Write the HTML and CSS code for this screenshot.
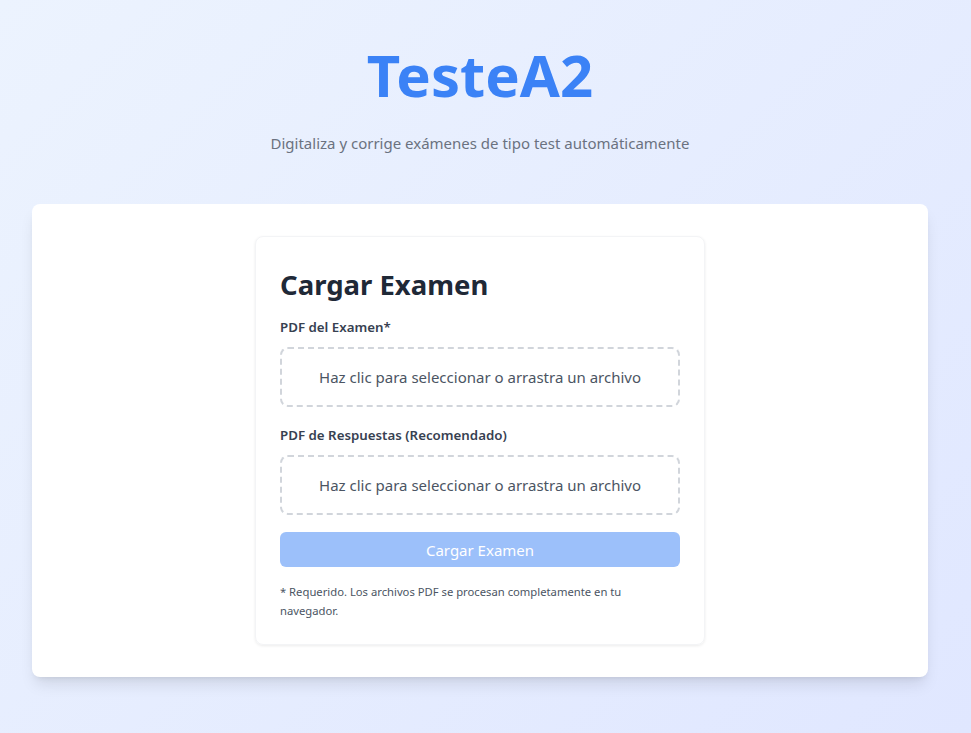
FILE: index.html
```html
<!DOCTYPE html>
<html lang="es">
<head>
  <meta charset="UTF-8">
  <meta name="viewport" content="width=device-width, initial-scale=1.0">
  <title>TesteA2</title>
  <link rel="stylesheet" href="styles.css">
</head>
<body>

<div class="app">
  <header class="header">
    <h1 class="brand">TesteA2</h1>
    <p class="tagline">Digitaliza y corrige exámenes de tipo test automáticamente</p>
  </header>

  <main class="panel">
    <div class="upload-card">
      <h2>Cargar Examen</h2>

      <label class="field-label">PDF del Examen*</label>
      <div class="dropzone">Haz clic para seleccionar o arrastra un archivo</div>

      <label class="field-label">PDF de Respuestas (Recomendado)</label>
      <div class="dropzone">Haz clic para seleccionar o arrastra un archivo</div>

      <button class="submit" disabled>Cargar Examen</button>

      <p class="note">* Requerido. Los archivos PDF se procesan completamente en tu navegador.</p>
    </div>
  </main>
</div>

</body>
</html>
```

FILE: styles.css
```css
    html, body {
      height: 100%;
    }

    body {
      margin: 0;
      padding: 0 11px 0 0;
      font-family: 'Noto Sans', 'Open Sans', sans-serif;
      background: linear-gradient(135deg, #ecf3fe 0%, #e0e7ff 100%);
      color: #1f2937;
    }

    .app {
      max-width: 896px;
      margin: 0 auto;
      padding: 32px 0;
    }

    /* Header */
    .header {
      text-align: center;
      padding-top: 7px;
      margin-bottom: 49px;
    }

    .brand {
      margin: 0;
      font-size: 58px;
      line-height: 72px;
      font-weight: 700;
      color: #3b82f6;
    }

    .tagline {
      margin: 20px 0 0;
      font-size: 15px;
      line-height: 24px;
      color: #6b7280;
    }

    /* White panel */
    .panel {
      background: #fff;
      border-radius: 8px;
      padding: 32px;
      box-shadow: 0 10px 15px -3px rgba(0, 0, 0, 0.1), 0 4px 6px -4px rgba(0, 0, 0, 0.1);
    }

    .upload-card {
      max-width: 400px;
      margin: 0 auto;
      padding: 24px;
      border: 1px solid #f3f4f6;
      border-radius: 8px;
      box-shadow: 0 1px 3px rgba(0, 0, 0, 0.08);
    }

    .upload-card h2 {
      margin: 6px 0 14px;
      font-size: 27.5px;
      line-height: 36px;
      font-weight: 700;
      color: #1f2937;
    }

    .field-label {
      display: block;
      margin-bottom: 10px;
      font-size: 13.3px;
      line-height: 20px;
      font-weight: 600;
      color: #374151;
    }

    .dropzone {
      height: 56px;
      display: flex;
      align-items: center;
      justify-content: center;
      border: 2px dashed #d1d5db;
      border-radius: 8px;
      font-size: 15px;
      color: #4b5563;
      margin-bottom: 18px;
      cursor: pointer;
    }

    .dropzone + .submit {
      margin-top: -1px;
    }

    .submit {
      display: block;
      width: 100%;
      height: 35px;
      border: none;
      border-radius: 6px;
      background: #3b82f6;
      opacity: 0.5;
      color: #fff;
      font-family: inherit;
      font-size: 15px;
    }

    .note {
      margin: 15px 0 0;
      font-size: 11.25px;
      line-height: 19px;
      color: #4b5563;
    }
```
